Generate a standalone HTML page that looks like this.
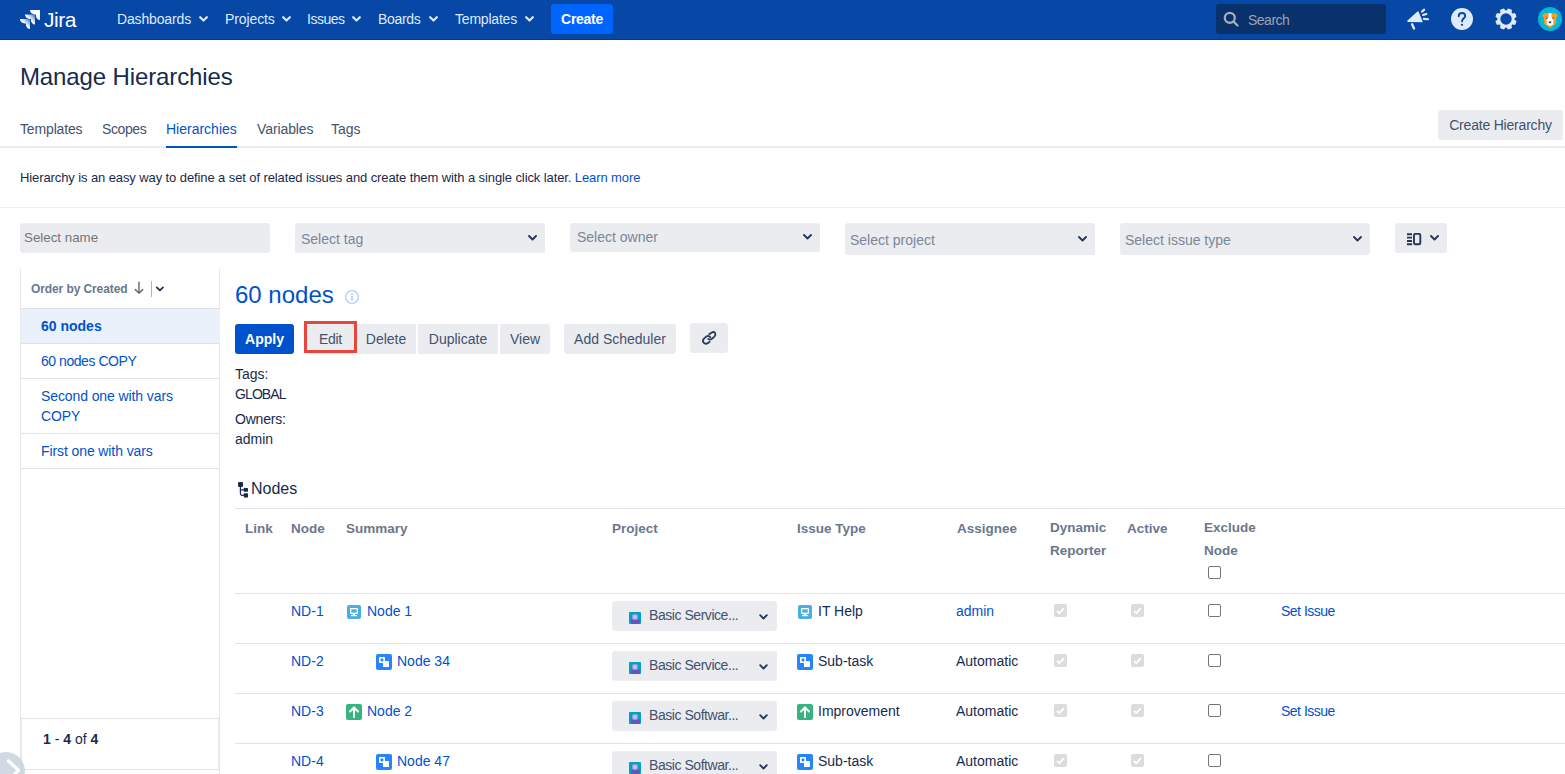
<!DOCTYPE html>
<html><head><meta charset="utf-8">
<style>
*{box-sizing:border-box;margin:0;padding:0}
html,body{width:1565px;height:774px;overflow:hidden;background:#fff;font-family:"Liberation Sans",sans-serif;color:#172b4d;font-size:14px}
.a{position:absolute;white-space:nowrap}
#hdr{position:absolute;left:0;top:0;width:1565px;height:40px;background:#0747a6;border-bottom:1px solid #283249}
.nav{color:#deebff;font-size:14px;top:11px}
.btn{position:absolute;background:#ebecf0;border-radius:3px;color:#42526e;font-size:14px;text-align:center;line-height:30px;height:30px;white-space:nowrap}
.link{color:#0052cc}
.sel{position:absolute;background:#ebecf0;border-radius:3px;height:30px}
.sel span{position:absolute;left:7px;top:7px;color:#7a869a;font-size:14px;white-space:nowrap}
.sel svg{position:absolute;right:8px;top:12px}
.side{position:absolute;left:20px;width:200px;border-left:1px solid #e8e9ed;border-right:1px solid #e8e9ed}
.si{position:absolute;left:21px;width:198px;border-bottom:1px solid #dfe1e6}
.si span{position:absolute;left:20px;color:#0052cc;font-size:14px;line-height:20px;white-space:normal;width:160px}
.th{position:absolute;color:#6b778c;font-weight:bold;font-size:13.5px;white-space:nowrap}
.td{position:absolute;font-size:14px;white-space:nowrap}
.hl{position:absolute;left:235px;width:1330px;height:1px;background:#dfe1e6}
.ico{position:absolute;width:14px;height:14px;border-radius:2px}
.psel{position:absolute;left:612px;width:165px;height:30px;background:#ebecf0;border-radius:3px}
.psel .pi{position:absolute;left:17px;top:11px;width:12px;height:12px;background:#00a3bf;border-radius:1px;overflow:hidden}
.psel .pi:before{content:"";position:absolute;left:1.5px;top:5.5px;width:9px;height:6px;border-radius:4.5px 4.5px 2px 2px;background:#6554c0}.psel .pi:after{content:"";position:absolute;left:3px;top:1.5px;width:6px;height:6px;border-radius:50%;background:#c9c3f5;box-shadow:inset 0 0 0 1px #998dd9}
.psel span{position:absolute;left:37px;top:6px;color:#42526e;font-size:14px;white-space:nowrap;letter-spacing:-0.45px}
.psel svg{position:absolute;left:147px;top:13px}
.cbd{position:absolute;width:13px;height:13px;border-radius:2px;background:#dcdcdc}
.cb{position:absolute;width:13px;height:13px;border-radius:2px;border:1px solid #767676;background:#fff}
</style></head><body>
<div id="hdr"></div>
<!-- logo -->
<svg class="a" style="left:20px;top:9px" width="21" height="21" viewBox="0 0 21 21">
  <defs>
    <linearGradient id="g1" x1="0" y1="1" x2="1" y2="0"><stop offset=".5" stop-color="#fff"/><stop offset=".95" stop-color="#fff" stop-opacity=".3"/></linearGradient>
  </defs>
  <path d="M10 1H20V11C18 11 16 9 16 7V5.5C13 5.5 10 4 10 1Z" fill="#fff"/>
  <path d="M5 5.5H15V15.5C13 15.5 11 13.5 11 11.5V10C8 10 5 8.5 5 5.5Z" fill="url(#g1)"/>
  <path d="M0 10H10V20C8 20 6 18 6 16V14.5C3 14.5 0 13 0 10Z" fill="url(#g1)"/>
</svg>
<div class="a" style="left:44px;top:8px;color:#fff;font-size:21px;letter-spacing:-0.5px">Jira</div>
<div class="a nav" style="left:117px;letter-spacing:-0.15px">Dashboards</div>
<div class="a nav" style="left:225px;letter-spacing:-0.1px">Projects</div>
<div class="a nav" style="left:307px;letter-spacing:-0.5px">Issues</div>
<div class="a nav" style="left:378px;letter-spacing:-0.3px">Boards</div>
<div class="a nav" style="left:455px;letter-spacing:-0.2px">Templates</div>
<svg class="a" style="left:199px;top:16px" width="9" height="6" viewBox="0 0 9 6"><path d="M1.2 1.2l3.3 3.3L7.8 1.2" stroke="#deebff" stroke-width="2.2" fill="none" stroke-linecap="round" stroke-linejoin="round"/></svg>
<svg class="a" style="left:282px;top:16px" width="9" height="6" viewBox="0 0 9 6"><path d="M1.2 1.2l3.3 3.3L7.8 1.2" stroke="#deebff" stroke-width="2.2" fill="none" stroke-linecap="round" stroke-linejoin="round"/></svg>
<svg class="a" style="left:352px;top:16px" width="9" height="6" viewBox="0 0 9 6"><path d="M1.2 1.2l3.3 3.3L7.8 1.2" stroke="#deebff" stroke-width="2.2" fill="none" stroke-linecap="round" stroke-linejoin="round"/></svg>
<svg class="a" style="left:429px;top:16px" width="9" height="6" viewBox="0 0 9 6"><path d="M1.2 1.2l3.3 3.3L7.8 1.2" stroke="#deebff" stroke-width="2.2" fill="none" stroke-linecap="round" stroke-linejoin="round"/></svg>
<svg class="a" style="left:525px;top:16px" width="9" height="6" viewBox="0 0 9 6"><path d="M1.2 1.2l3.3 3.3L7.8 1.2" stroke="#deebff" stroke-width="2.2" fill="none" stroke-linecap="round" stroke-linejoin="round"/></svg>
<div class="a" style="left:551px;top:4px;width:62px;height:30px;background:#0065ff;border-radius:3px;color:#fff;font-weight:bold;font-size:14px;text-align:center;line-height:30px;letter-spacing:-0.3px">Create</div>
<div class="a" style="left:1216px;top:4px;width:170px;height:30px;background:#09326c;border-radius:3px"></div>
<svg class="a" style="left:1223px;top:11px" width="16" height="16" viewBox="0 0 16 16"><circle cx="6.8" cy="6.8" r="5" stroke="#a5adba" stroke-width="2.3" fill="none"/><path d="M10.5 10.5l4 4" stroke="#a5adba" stroke-width="2.3" stroke-linecap="round"/></svg>
<div class="a" style="left:1248px;top:12px;color:#9aa3b3;font-size:14px;letter-spacing:-0.5px">Search</div>
<!-- megaphone -->
<svg class="a" style="left:1400px;top:4px" width="32" height="28" viewBox="0 0 32 28">
  <path d="M8 17.1L18 8.2L21.8 17.5Z" fill="#deebff" stroke="#deebff" stroke-width="1.6" stroke-linejoin="round"/>
  <path d="M12.1 20.3L14 24.5" stroke="#deebff" stroke-width="2.4" stroke-linecap="round"/>
  <path d="M22 7.6L24.2 5.6M23 11L26.4 10.1M23.9 14.9L28 15.3" stroke="#deebff" stroke-width="2.1" stroke-linecap="round"/>
</svg>
<!-- help -->
<svg class="a" style="left:1451px;top:8px" width="22" height="22" viewBox="0 0 22 22">
  <circle cx="11" cy="11" r="11" fill="#deebff"/>
  <path d="M7.7 8.2C7.7 6.3 9.2 5 11 5C12.8 5 14.2 6.3 14.2 8C14.2 10.2 11 10.5 11 13.4" stroke="#0747a6" stroke-width="1.9" fill="none" stroke-linecap="round"/>
  <circle cx="11" cy="16.8" r="1.15" fill="#0747a6"/>
</svg>
<!-- gear -->
<svg class="a" style="left:1495px;top:8px" width="22" height="22" viewBox="0 0 22 22">
  <g fill="#deebff" transform="rotate(22.5 11 11)">
    <circle cx="11" cy="11" r="8.6"/>
    <rect x="8.6" y="0.3" width="4.8" height="4.5" rx="1.2"/>
    <rect x="8.6" y="0.3" width="4.8" height="4.5" rx="1.2" transform="rotate(45 11 11)"/>
    <rect x="8.6" y="0.3" width="4.8" height="4.5" rx="1.2" transform="rotate(90 11 11)"/>
    <rect x="8.6" y="0.3" width="4.8" height="4.5" rx="1.2" transform="rotate(135 11 11)"/>
    <rect x="8.6" y="0.3" width="4.8" height="4.5" rx="1.2" transform="rotate(180 11 11)"/>
    <rect x="8.6" y="0.3" width="4.8" height="4.5" rx="1.2" transform="rotate(225 11 11)"/>
    <rect x="8.6" y="0.3" width="4.8" height="4.5" rx="1.2" transform="rotate(270 11 11)"/>
    <rect x="8.6" y="0.3" width="4.8" height="4.5" rx="1.2" transform="rotate(315 11 11)"/>
  </g>
  <circle cx="11" cy="11" r="5.7" fill="#0747a6"/>
</svg>
<!-- avatar -->
<svg class="a" style="left:1538px;top:7px" width="24" height="24" viewBox="0 0 24 24">
  <circle cx="12" cy="12" r="12" fill="#00b8d9"/>
  <path d="M4.2 9.2C4.5 7.5 5.5 6.3 7 6.2H17C18.5 6.3 19.5 7.5 19.8 9.2L18.2 10.5L17.8 17L14 19.5L12.8 20.8H11.2L10 19.5L6.2 17L5.8 10.5Z" fill="#ff991f"/>
  <path d="M10.6 6.2H13.4L13.6 10.5L15.5 13L15.2 17.5L12 19L8.8 17.5L8.5 13L10.4 10.5Z" fill="#fff"/>
  <path d="M11 19.2H13L12 20.6Z" fill="#ffab00"/>
  <circle cx="8.8" cy="11.2" r=".9" fill="#6b778c"/><circle cx="15.2" cy="11.2" r=".9" fill="#6b778c"/>
  <path d="M10.4 14.6H13.6L12.8 16.2H11.2Z" fill="#253858"/>
</svg>

<div class="a" style="left:20px;top:63px;font-size:24px;color:#172b4d;letter-spacing:-0.12px">Manage Hierarchies</div>
<div class="a" style="left:20px;top:121px;color:#42526e;letter-spacing:-0.15px">Templates</div>
<div class="a" style="left:102px;top:121px;color:#42526e;letter-spacing:-0.4px">Scopes</div>
<div class="a" style="left:166px;top:121px;color:#0052cc">Hierarchies</div>
<div class="a" style="left:257px;top:121px;color:#42526e;letter-spacing:-0.1px">Variables</div>
<div class="a" style="left:331px;top:121px;color:#42526e">Tags</div>
<div class="a" style="left:0;top:146px;width:1565px;height:2px;background:#ebecf0"></div>
<div class="a" style="left:166px;top:146px;width:71px;height:2px;background:#0052cc"></div>
<div class="btn" style="left:1438px;top:110px;width:125px;letter-spacing:-0.2px">Create Hierarchy</div>

<div class="a" style="left:20px;top:170px;font-size:13px;letter-spacing:-0.1px">Hierarchy is an easy way to define a set of related issues and create them with a single click later. <span class="link">Learn more</span></div>
<div class="a" style="left:0;top:207px;width:1565px;height:1px;background:#ebecf0"></div>

<!-- filters -->
<div class="sel" style="left:20px;top:223px;width:250px"><span style="left:4px;top:7px;font-size:13.33px;color:#757575">Select name</span></div>
<div class="sel" style="left:295px;top:223px;width:250px"><span style="left:6px;top:8px">Select tag</span><svg width="9" height="6" viewBox="0 0 9 6"><path d="M1 1l3.5 3.5L8 1" stroke="#253858" stroke-width="1.9" fill="none" stroke-linecap="round" stroke-linejoin="round"/></svg></div>
<div class="sel" style="left:570px;top:223px;width:250px;height:29px"><span style="top:6px">Select owner</span><svg width="9" height="6" viewBox="0 0 9 6" style="top:11px"><path d="M1 1l3.5 3.5L8 1" stroke="#253858" stroke-width="1.9" fill="none" stroke-linecap="round" stroke-linejoin="round"/></svg></div>
<div class="sel" style="left:845px;top:223px;width:250px;height:32px"><span style="left:5px;top:9px">Select project</span><svg width="9" height="6" viewBox="0 0 9 6" style="top:13px"><path d="M1 1l3.5 3.5L8 1" stroke="#253858" stroke-width="1.9" fill="none" stroke-linecap="round" stroke-linejoin="round"/></svg></div>
<div class="sel" style="left:1120px;top:223px;width:250px;height:32px"><span style="left:5px;top:9px">Select issue type</span><svg width="9" height="6" viewBox="0 0 9 6" style="top:13px"><path d="M1 1l3.5 3.5L8 1" stroke="#253858" stroke-width="1.9" fill="none" stroke-linecap="round" stroke-linejoin="round"/></svg></div>
<div class="sel" style="left:1395px;top:223px;width:52px">
  <svg width="16" height="13" viewBox="0 0 16 13" style="left:12px;top:10px;right:auto">
    <path d="M0 1.2H5M0 4.6H5M0 8H5M0 11.3H5" stroke="#253858" stroke-width="1.9"/>
    <rect x="7" y="0.9" width="6.3" height="10.4" rx="1.3" stroke="#253858" stroke-width="1.9" fill="none"/>
  </svg>
  <svg width="9" height="6" viewBox="0 0 9 6" style="right:8px"><path d="M1 1l3.5 3.5L8 1" stroke="#253858" stroke-width="1.9" fill="none" stroke-linecap="round" stroke-linejoin="round"/></svg>
</div>

<!-- sidebar -->
<div class="side" style="top:268px;height:506px"></div>
<div class="si" style="top:268px;height:41px"></div>
<div class="a" style="left:31px;top:282px;color:#6b778c;font-weight:bold;font-size:12px;letter-spacing:-0.1px">Order by Created</div>
<svg class="a" style="left:134px;top:281px" width="10" height="14" viewBox="0 0 10 14"><path d="M5 1.2V12M1.3 8.6L5 12.3L8.7 8.6" stroke="#6f6f6f" stroke-width="1.5" fill="none" stroke-linecap="round" stroke-linejoin="round"/></svg>
<div class="a" style="left:151px;top:281px;width:1px;height:16px;background:#b3b3b3"></div>
<svg class="a" style="left:155px;top:286px" width="10" height="6" viewBox="0 0 10 6"><path d="M1.8 1.3L4.9 4.3L8 1.3" stroke="#172b4d" stroke-width="1.7" fill="none" stroke-linecap="round" stroke-linejoin="round"/></svg>
<div class="si" style="top:309px;height:35px;width:199px;background:#eaf1fa"><span style="top:7px;font-weight:bold">60 nodes</span></div>
<div class="si" style="top:344px;height:35px"><span style="top:7px;letter-spacing:-0.45px">60 nodes COPY</span></div>
<div class="si" style="top:379px;height:55px"><span style="top:7px;letter-spacing:-0.1px">Second one with vars COPY</span></div>
<div class="si" style="top:434px;height:35px"><span style="top:7px;letter-spacing:-0.1px">First one with vars</span></div>
<div class="a" style="left:21px;top:718px;width:198px;height:52px;border:1px solid #dfe1e6;border-left-color:#e8e9ed;border-right-color:#e8e9ed"></div>
<div class="a" style="left:43px;top:731px;font-size:14px;color:#172b4d"><b>1</b> - <b>4</b> of <b>4</b></div>
<svg class="a" style="left:0;top:752px" width="26" height="22" viewBox="0 0 26 22">
  <circle cx="6" cy="19" r="19" fill="#c1cddb" fill-opacity=".75"/>
  <path d="M8.5 9L18.5 18.3L10 27" stroke="#fff" stroke-width="3.3" fill="none" stroke-linecap="round" stroke-linejoin="round"/>
</svg>

<!-- main -->
<div class="a" style="left:235px;top:281px;font-size:24px;color:#0052cc">60 nodes</div>
<svg class="a" style="left:344px;top:289px" width="16" height="16" viewBox="0 0 16 16"><circle cx="8" cy="8" r="6.4" stroke="#abd0ff" stroke-width="1.4" fill="none"/><path d="M8 7v4.5" stroke="#abd0ff" stroke-width="1.7"/><circle cx="8" cy="5" r=".95" fill="#abd0ff"/></svg>
<div class="btn" style="left:235px;top:324px;width:59px;background:#0052cc;color:#fff;font-weight:bold">Apply</div>
<div class="btn" style="left:307px;top:324px;width:47px;border-radius:3px 0 0 3px;letter-spacing:-0.3px">Edit</div>
<div class="btn" style="left:356px;top:324px;width:60px;border-radius:0">Delete</div>
<div class="btn" style="left:418px;top:324px;width:80px;border-radius:0">Duplicate</div>
<div class="btn" style="left:500px;top:324px;width:50px;border-radius:0 3px 3px 0">View</div>
<div class="a" style="left:304px;top:321px;width:53px;height:32px;border:3px solid #e5473d"></div>
<div class="btn" style="left:564px;top:324px;width:112px">Add Scheduler</div>
<div class="btn" style="left:690px;top:323px;width:38px"></div>
<svg class="a" style="left:696px;top:326px" width="28" height="24" viewBox="0 0 28 24"><g stroke="#253858" stroke-width="1.75" fill="none" stroke-linecap="round" stroke-linejoin="round"><path d="M14.3 11.2Q12.5 9.2 10.5 10.4L8 12.6Q6 14.6 7.6 16.7Q9.6 18.6 12 17L13.7 15.8"/><path d="M13.2 8.3L15.8 6.5Q17.8 5.3 19.1 7Q20.1 8.8 18.4 10.6L15.6 13Q13.8 14.2 12.3 12.8"/></g></svg>

<div class="a" style="left:235px;top:366px;font-size:14px;color:#172b4d">Tags:</div>
<div class="a" style="left:235px;top:386px;font-size:14px;color:#172b4d;letter-spacing:-0.9px">GLOBAL</div>
<div class="a" style="left:235px;top:411px;font-size:14px;color:#172b4d;letter-spacing:-0.2px">Owners:</div>
<div class="a" style="left:235px;top:431px;font-size:14px;color:#172b4d">admin</div>

<svg class="a" style="left:237px;top:481px" width="12" height="18" viewBox="0 0 12 18"><g fill="#172b4d"><rect x="1" y="1" width="5" height="5" rx="1.3"/><rect x="6.8" y="7" width="4.2" height="3.7" rx=".6"/><rect x="6.8" y="12.2" width="4.2" height="4.3" rx=".6"/></g><path d="M3.4 5.5V12.6Q3.4 14.3 5.1 14.3H7.5M3.4 8.85H7.5" stroke="#172b4d" stroke-width="1.2" fill="none"/></svg>
<div class="a" style="left:251px;top:480px;font-size:16px;color:#172b4d">Nodes</div>
<div class="hl" style="top:508px"></div>

<div class="th" style="left:245px;top:521px">Link</div>
<div class="th" style="left:291px;top:521px">Node</div>
<div class="th" style="left:346px;top:521px">Summary</div>
<div class="th" style="left:612px;top:521px">Project</div>
<div class="th" style="left:797px;top:521px">Issue Type</div>
<div class="th" style="left:957px;top:521px">Assignee</div>
<div class="th" style="left:1050px;top:521px;line-height:23px;top:516px">Dynamic<br>Reporter</div>
<div class="th" style="left:1127px;top:521px">Active</div>
<div class="th" style="left:1204px;top:516px;line-height:23px">Exclude<br>Node</div>
<div class="cb" style="left:1208px;top:566px"></div>
<div class="hl" style="top:593px"></div>
<div class="hl" style="top:643px"></div>
<div class="hl" style="top:693px"></div>
<div class="hl" style="top:743px"></div>
<!--ROWS-->
<div class="td link" style="left:291px;top:603px">ND-1</div>
<svg class="a" style="left:347px;top:605px" width="14" height="14" viewBox="0 0 14 14"><rect width="14" height="14" rx="2" fill="#4bade8"/><rect x="3" y="3" width="8" height="6" rx="1" fill="#fff"/><rect x="4.3" y="4.3" width="5.4" height="3.4" fill="#4bade8"/><rect x="5.8" y="9" width="2.4" height="1.2" fill="#fff"/><rect x="4" y="10" width="6" height="1.2" fill="#fff"/></svg>
<div class="td link" style="left:367px;top:603px">Node 1</div>
<div class="psel" style="top:601px"><div class="pi"></div><span>Basic Service...</span><svg width="9" height="6" viewBox="0 0 9 6"><path d="M1.2 1.2l3.3 3.3L7.8 1.2" stroke="#253858" stroke-width="1.9" fill="none" stroke-linecap="round" stroke-linejoin="round"/></svg></div>
<svg class="a" style="left:798px;top:605px" width="14" height="14" viewBox="0 0 14 14"><rect width="14" height="14" rx="2" fill="#4bade8"/><rect x="3" y="3" width="8" height="6" rx="1" fill="#fff"/><rect x="4.3" y="4.3" width="5.4" height="3.4" fill="#4bade8"/><rect x="5.8" y="9" width="2.4" height="1.2" fill="#fff"/><rect x="4" y="10" width="6" height="1.2" fill="#fff"/></svg>
<div class="td" style="left:818px;top:603px">IT Help</div>
<div class="td link" style="left:956px;top:603px">admin</div>
<svg class="a" style="left:1054px;top:604px" width="13" height="13" viewBox="0 0 13 13"><rect width="13" height="13" rx="2" fill="#dcdcdc"/><path d="M3 6.8l2.3 2.3L10 4.2" stroke="#fff" stroke-width="1.8" fill="none"/></svg>
<svg class="a" style="left:1131px;top:604px" width="13" height="13" viewBox="0 0 13 13"><rect width="13" height="13" rx="2" fill="#dcdcdc"/><path d="M3 6.8l2.3 2.3L10 4.2" stroke="#fff" stroke-width="1.8" fill="none"/></svg>
<div class="cb" style="left:1208px;top:604px"></div>
<div class="td link" style="left:1281px;top:603px;letter-spacing:-0.5px">Set Issue</div>
<div class="td link" style="left:291px;top:653px">ND-2</div>
<svg class="a" style="left:376px;top:654px" width="16" height="16" viewBox="0 0 16 16"><rect width="16" height="16" rx="2" fill="#2684ff"/><rect x="3" y="3" width="6" height="6" rx=".8" fill="#fff"/><rect x="4.6" y="4.6" width="2.8" height="2.8" rx=".8" fill="#2684ff"/><rect x="7" y="7" width="6" height="6" rx=".5" fill="#fff"/></svg>
<div class="td link" style="left:397px;top:653px">Node 34</div>
<div class="psel" style="top:651px"><div class="pi"></div><span>Basic Service...</span><svg width="9" height="6" viewBox="0 0 9 6"><path d="M1.2 1.2l3.3 3.3L7.8 1.2" stroke="#253858" stroke-width="1.9" fill="none" stroke-linecap="round" stroke-linejoin="round"/></svg></div>
<svg class="a" style="left:797px;top:654px" width="16" height="16" viewBox="0 0 16 16"><rect width="16" height="16" rx="2" fill="#2684ff"/><rect x="3" y="3" width="6" height="6" rx=".8" fill="#fff"/><rect x="4.6" y="4.6" width="2.8" height="2.8" rx=".8" fill="#2684ff"/><rect x="7" y="7" width="6" height="6" rx=".5" fill="#fff"/></svg>
<div class="td" style="left:818px;top:653px">Sub-task</div>
<div class="td" style="left:956px;top:653px">Automatic</div>
<svg class="a" style="left:1054px;top:654px" width="13" height="13" viewBox="0 0 13 13"><rect width="13" height="13" rx="2" fill="#dcdcdc"/><path d="M3 6.8l2.3 2.3L10 4.2" stroke="#fff" stroke-width="1.8" fill="none"/></svg>
<svg class="a" style="left:1131px;top:654px" width="13" height="13" viewBox="0 0 13 13"><rect width="13" height="13" rx="2" fill="#dcdcdc"/><path d="M3 6.8l2.3 2.3L10 4.2" stroke="#fff" stroke-width="1.8" fill="none"/></svg>
<div class="cb" style="left:1208px;top:654px"></div>
<div class="td link" style="left:291px;top:703px">ND-3</div>
<svg class="a" style="left:346px;top:704px" width="16" height="16" viewBox="0 0 16 16"><rect width="16" height="16" rx="2" fill="#36b37e"/><path d="M8 13V3.6M4 7.5L8 3.5l4 4" stroke="#fff" stroke-width="2" fill="none" stroke-linecap="round" stroke-linejoin="miter"/></svg>
<div class="td link" style="left:367px;top:703px">Node 2</div>
<div class="psel" style="top:701px"><div class="pi"></div><span>Basic Softwar...</span><svg width="9" height="6" viewBox="0 0 9 6"><path d="M1.2 1.2l3.3 3.3L7.8 1.2" stroke="#253858" stroke-width="1.9" fill="none" stroke-linecap="round" stroke-linejoin="round"/></svg></div>
<svg class="a" style="left:797px;top:704px" width="16" height="16" viewBox="0 0 16 16"><rect width="16" height="16" rx="2" fill="#36b37e"/><path d="M8 13V3.6M4 7.5L8 3.5l4 4" stroke="#fff" stroke-width="2" fill="none" stroke-linecap="round" stroke-linejoin="miter"/></svg>
<div class="td" style="left:818px;top:703px">Improvement</div>
<div class="td" style="left:956px;top:703px">Automatic</div>
<svg class="a" style="left:1054px;top:704px" width="13" height="13" viewBox="0 0 13 13"><rect width="13" height="13" rx="2" fill="#dcdcdc"/><path d="M3 6.8l2.3 2.3L10 4.2" stroke="#fff" stroke-width="1.8" fill="none"/></svg>
<svg class="a" style="left:1131px;top:704px" width="13" height="13" viewBox="0 0 13 13"><rect width="13" height="13" rx="2" fill="#dcdcdc"/><path d="M3 6.8l2.3 2.3L10 4.2" stroke="#fff" stroke-width="1.8" fill="none"/></svg>
<div class="cb" style="left:1208px;top:704px"></div>
<div class="td link" style="left:1281px;top:703px;letter-spacing:-0.5px">Set Issue</div>
<div class="td link" style="left:291px;top:753px">ND-4</div>
<svg class="a" style="left:376px;top:754px" width="16" height="16" viewBox="0 0 16 16"><rect width="16" height="16" rx="2" fill="#2684ff"/><rect x="3" y="3" width="6" height="6" rx=".8" fill="#fff"/><rect x="4.6" y="4.6" width="2.8" height="2.8" rx=".8" fill="#2684ff"/><rect x="7" y="7" width="6" height="6" rx=".5" fill="#fff"/></svg>
<div class="td link" style="left:397px;top:753px">Node 47</div>
<div class="psel" style="top:751px"><div class="pi"></div><span>Basic Softwar...</span><svg width="9" height="6" viewBox="0 0 9 6"><path d="M1.2 1.2l3.3 3.3L7.8 1.2" stroke="#253858" stroke-width="1.9" fill="none" stroke-linecap="round" stroke-linejoin="round"/></svg></div>
<svg class="a" style="left:797px;top:754px" width="16" height="16" viewBox="0 0 16 16"><rect width="16" height="16" rx="2" fill="#2684ff"/><rect x="3" y="3" width="6" height="6" rx=".8" fill="#fff"/><rect x="4.6" y="4.6" width="2.8" height="2.8" rx=".8" fill="#2684ff"/><rect x="7" y="7" width="6" height="6" rx=".5" fill="#fff"/></svg>
<div class="td" style="left:818px;top:753px">Sub-task</div>
<div class="td" style="left:956px;top:753px">Automatic</div>
<svg class="a" style="left:1054px;top:754px" width="13" height="13" viewBox="0 0 13 13"><rect width="13" height="13" rx="2" fill="#dcdcdc"/><path d="M3 6.8l2.3 2.3L10 4.2" stroke="#fff" stroke-width="1.8" fill="none"/></svg>
<svg class="a" style="left:1131px;top:754px" width="13" height="13" viewBox="0 0 13 13"><rect width="13" height="13" rx="2" fill="#dcdcdc"/><path d="M3 6.8l2.3 2.3L10 4.2" stroke="#fff" stroke-width="1.8" fill="none"/></svg>
<div class="cb" style="left:1208px;top:754px"></div>
</body></html>
